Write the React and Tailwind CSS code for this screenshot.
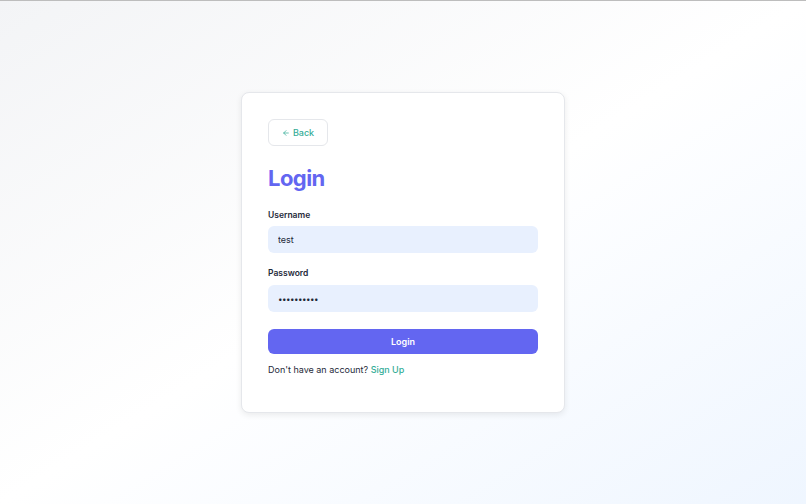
import { ArrowLeft } from "lucide-react";

const App = () => {
  return (
    <div
      className="min-h-screen w-full border-t border-[#bdbdbd] bg-gradient-to-br from-gray-100 via-white to-blue-50 flex items-center justify-center"
      style={{ fontFamily: "Inter, 'Noto Sans', sans-serif" }}
    >
      <div className="w-[324px] bg-white border border-gray-200 rounded-lg shadow-[0_2px_6px_rgba(0,0,0,0.08)] px-[26px] pt-[26px] pb-[35px]">
        <button className="flex items-center gap-[3px] h-[27px] w-[60px] justify-center border border-gray-200 rounded-md bg-white text-[9px] text-[#34ad97] font-medium">
          <ArrowLeft size={8} strokeWidth={2.2} />
          Back
        </button>

        <h2 className="mt-[18px] text-[22px] leading-[28px] font-bold tracking-tight text-[#6366f1]">Login</h2>

        <form className="mt-[17px]">
          <label className="block text-[8.5px] leading-[12px] font-semibold text-gray-800">Username</label>
          <input
            type="text"
            defaultValue="test"
            className="mt-[5px] w-full h-[27px] px-[10px] rounded-md bg-[#e8f0fe] text-[9px] text-gray-800 outline-none"
          />

          <label className="block mt-[14px] text-[8.5px] leading-[12px] font-semibold text-gray-800">Password</label>
          <input
            type="password"
            defaultValue="1234567890"
            className="mt-[6px] w-full h-[27px] px-[10px] rounded-md bg-[#e8f0fe] text-[8px] tracking-[-0.5px] text-gray-800 outline-none"
          />

          <button
            type="button"
            className="mt-[17px] w-full h-[25px] rounded-md bg-[#6366f1] text-white text-[9px] font-semibold"
          >
            Login
          </button>
        </form>

        <p className="mt-[9px] text-[9px] leading-[14px] text-gray-800">
          Don't have an account? <a href="#" className="text-[#34ad97] font-medium">Sign Up</a>
        </p>
      </div>
    </div>
  );
};

export default App;
